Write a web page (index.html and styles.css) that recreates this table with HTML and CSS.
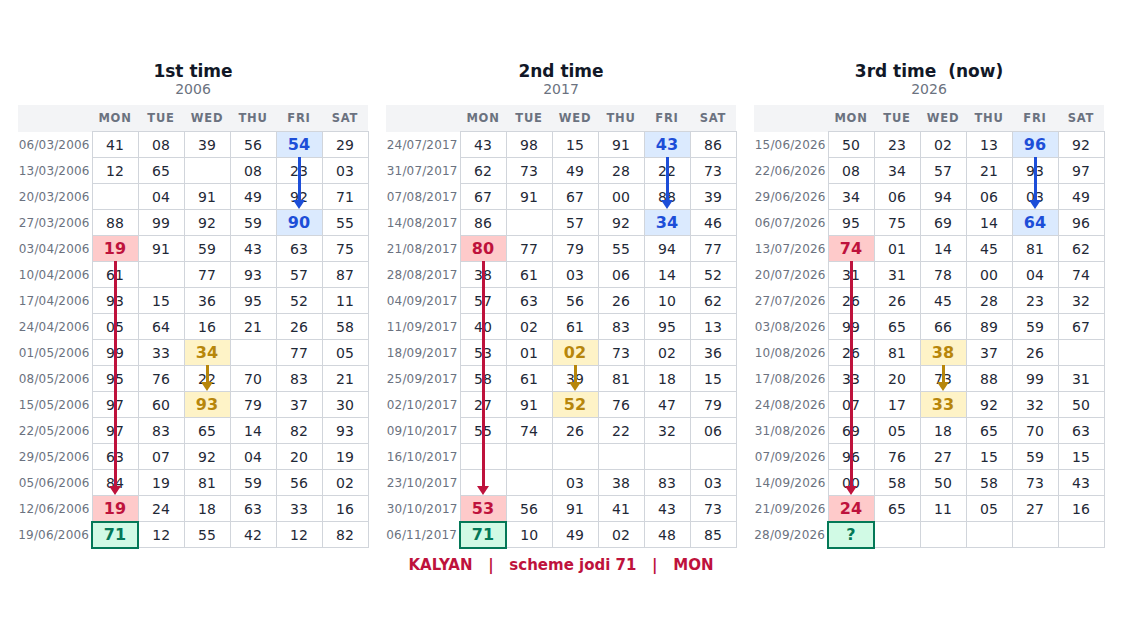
FILE: index.html
```html
<!DOCTYPE html>
<html>
<head>
<meta charset="utf-8">
<title>KALYAN scheme jodi 71</title>
<link rel="stylesheet" href="styles.css">
</head>
<body>
<div class="page">
  <div class="panels">
    <section class="panel">
      <div class="title">1st time</div>
      <div class="year">2006</div>
      <div class="grid-wrap">
        <table>
          <colgroup><col class="dc"><col class="nc"><col class="nc"><col class="nc"><col class="nc"><col class="nc"><col class="nc"></colgroup>
          <thead><tr><th></th><th>MON</th><th>TUE</th><th>WED</th><th>THU</th><th>FRI</th><th>SAT</th></tr></thead>
          <tbody>
            <tr><td class="d">06/03/2006</td><td>41</td><td>08</td><td>39</td><td>56</td><td class="b">54</td><td>29</td></tr>
            <tr><td class="d">13/03/2006</td><td>12</td><td>65</td><td></td><td>08</td><td>23</td><td>03</td></tr>
            <tr><td class="d">20/03/2006</td><td></td><td>04</td><td>91</td><td>49</td><td>92</td><td>71</td></tr>
            <tr><td class="d">27/03/2006</td><td>88</td><td>99</td><td>92</td><td>59</td><td class="b">90</td><td>55</td></tr>
            <tr><td class="d">03/04/2006</td><td class="r">19</td><td>91</td><td>59</td><td>43</td><td>63</td><td>75</td></tr>
            <tr><td class="d">10/04/2006</td><td>61</td><td></td><td>77</td><td>93</td><td>57</td><td>87</td></tr>
            <tr><td class="d">17/04/2006</td><td>93</td><td>15</td><td>36</td><td>95</td><td>52</td><td>11</td></tr>
            <tr><td class="d">24/04/2006</td><td>05</td><td>64</td><td>16</td><td>21</td><td>26</td><td>58</td></tr>
            <tr><td class="d">01/05/2006</td><td>99</td><td>33</td><td class="y">34</td><td></td><td>77</td><td>05</td></tr>
            <tr><td class="d">08/05/2006</td><td>95</td><td>76</td><td>22</td><td>70</td><td>83</td><td>21</td></tr>
            <tr><td class="d">15/05/2006</td><td>97</td><td>60</td><td class="y">93</td><td>79</td><td>37</td><td>30</td></tr>
            <tr><td class="d">22/05/2006</td><td>97</td><td>83</td><td>65</td><td>14</td><td>82</td><td>93</td></tr>
            <tr><td class="d">29/05/2006</td><td>63</td><td>07</td><td>92</td><td>04</td><td>20</td><td>19</td></tr>
            <tr><td class="d">05/06/2006</td><td>84</td><td>19</td><td>81</td><td>59</td><td>56</td><td>02</td></tr>
            <tr><td class="d">12/06/2006</td><td class="r">19</td><td>24</td><td>18</td><td>63</td><td>33</td><td>16</td></tr>
            <tr><td class="d">19/06/2006</td><td class="g">71</td><td>12</td><td>55</td><td>42</td><td>12</td><td>82</td></tr>
          </tbody>
        </table>
        <div class="arrow fri"></div>
        <div class="arrow mon"></div>
        <div class="arrow wed"></div>
      </div>
    </section>

    <section class="panel">
      <div class="title">2nd time</div>
      <div class="year">2017</div>
      <div class="grid-wrap">
        <table>
          <colgroup><col class="dc"><col class="nc"><col class="nc"><col class="nc"><col class="nc"><col class="nc"><col class="nc"></colgroup>
          <thead><tr><th></th><th>MON</th><th>TUE</th><th>WED</th><th>THU</th><th>FRI</th><th>SAT</th></tr></thead>
          <tbody>
            <tr><td class="d">24/07/2017</td><td>43</td><td>98</td><td>15</td><td>91</td><td class="b">43</td><td>86</td></tr>
            <tr><td class="d">31/07/2017</td><td>62</td><td>73</td><td>49</td><td>28</td><td>22</td><td>73</td></tr>
            <tr><td class="d">07/08/2017</td><td>67</td><td>91</td><td>67</td><td>00</td><td>88</td><td>39</td></tr>
            <tr><td class="d">14/08/2017</td><td>86</td><td></td><td>57</td><td>92</td><td class="b">34</td><td>46</td></tr>
            <tr><td class="d">21/08/2017</td><td class="r">80</td><td>77</td><td>79</td><td>55</td><td>94</td><td>77</td></tr>
            <tr><td class="d">28/08/2017</td><td>38</td><td>61</td><td>03</td><td>06</td><td>14</td><td>52</td></tr>
            <tr><td class="d">04/09/2017</td><td>57</td><td>63</td><td>56</td><td>26</td><td>10</td><td>62</td></tr>
            <tr><td class="d">11/09/2017</td><td>40</td><td>02</td><td>61</td><td>83</td><td>95</td><td>13</td></tr>
            <tr><td class="d">18/09/2017</td><td>53</td><td>01</td><td class="y">02</td><td>73</td><td>02</td><td>36</td></tr>
            <tr><td class="d">25/09/2017</td><td>58</td><td>61</td><td>39</td><td>81</td><td>18</td><td>15</td></tr>
            <tr><td class="d">02/10/2017</td><td>27</td><td>91</td><td class="y">52</td><td>76</td><td>47</td><td>79</td></tr>
            <tr><td class="d">09/10/2017</td><td>55</td><td>74</td><td>26</td><td>22</td><td>32</td><td>06</td></tr>
            <tr><td class="d">16/10/2017</td><td></td><td></td><td></td><td></td><td></td><td></td></tr>
            <tr><td class="d">23/10/2017</td><td></td><td></td><td>03</td><td>38</td><td>83</td><td>03</td></tr>
            <tr><td class="d">30/10/2017</td><td class="r">53</td><td>56</td><td>91</td><td>41</td><td>43</td><td>73</td></tr>
            <tr><td class="d">06/11/2017</td><td class="g">71</td><td>10</td><td>49</td><td>02</td><td>48</td><td>85</td></tr>
          </tbody>
        </table>
        <div class="arrow fri"></div>
        <div class="arrow mon"></div>
        <div class="arrow wed"></div>
      </div>
    </section>

    <section class="panel">
      <div class="title">3rd time  (now)</div>
      <div class="year">2026</div>
      <div class="grid-wrap">
        <table>
          <colgroup><col class="dc"><col class="nc"><col class="nc"><col class="nc"><col class="nc"><col class="nc"><col class="nc"></colgroup>
          <thead><tr><th></th><th>MON</th><th>TUE</th><th>WED</th><th>THU</th><th>FRI</th><th>SAT</th></tr></thead>
          <tbody>
            <tr><td class="d">15/06/2026</td><td>50</td><td>23</td><td>02</td><td>13</td><td class="b">96</td><td>92</td></tr>
            <tr><td class="d">22/06/2026</td><td>08</td><td>34</td><td>57</td><td>21</td><td>93</td><td>97</td></tr>
            <tr><td class="d">29/06/2026</td><td>34</td><td>06</td><td>94</td><td>06</td><td>03</td><td>49</td></tr>
            <tr><td class="d">06/07/2026</td><td>95</td><td>75</td><td>69</td><td>14</td><td class="b">64</td><td>96</td></tr>
            <tr><td class="d">13/07/2026</td><td class="r">74</td><td>01</td><td>14</td><td>45</td><td>81</td><td>62</td></tr>
            <tr><td class="d">20/07/2026</td><td>31</td><td>31</td><td>78</td><td>00</td><td>04</td><td>74</td></tr>
            <tr><td class="d">27/07/2026</td><td>26</td><td>26</td><td>45</td><td>28</td><td>23</td><td>32</td></tr>
            <tr><td class="d">03/08/2026</td><td>99</td><td>65</td><td>66</td><td>89</td><td>59</td><td>67</td></tr>
            <tr><td class="d">10/08/2026</td><td>26</td><td>81</td><td class="y">38</td><td>37</td><td>26</td><td></td></tr>
            <tr><td class="d">17/08/2026</td><td>33</td><td>20</td><td>73</td><td>88</td><td>99</td><td>31</td></tr>
            <tr><td class="d">24/08/2026</td><td>07</td><td>17</td><td class="y">33</td><td>92</td><td>32</td><td>50</td></tr>
            <tr><td class="d">31/08/2026</td><td>69</td><td>05</td><td>18</td><td>65</td><td>70</td><td>63</td></tr>
            <tr><td class="d">07/09/2026</td><td>96</td><td>76</td><td>27</td><td>15</td><td>59</td><td>15</td></tr>
            <tr><td class="d">14/09/2026</td><td>00</td><td>58</td><td>50</td><td>58</td><td>73</td><td>43</td></tr>
            <tr><td class="d">21/09/2026</td><td class="r">24</td><td>65</td><td>11</td><td>05</td><td>27</td><td>16</td></tr>
            <tr><td class="d">28/09/2026</td><td class="g">?</td><td></td><td></td><td></td><td></td><td></td></tr>
          </tbody>
        </table>
        <div class="arrow fri"></div>
        <div class="arrow mon"></div>
        <div class="arrow wed"></div>
      </div>
    </section>
  </div>
  <div class="caption">KALYAN   |   scheme jodi 71   |   MON</div>
</div>
</body>
</html>
```

FILE: styles.css
```css
body {
  margin: 0;
  background: #ffffff;
  font-family: "DejaVu Sans", "Noto Sans", sans-serif;
}

.page {
  padding-top: 61px;
}

.panels {
  display: flex;
  gap: 18px;
  padding: 0 18px;
}

.panel {
  width: 350px;
  flex: none;
}

.title {
  text-align: center;
  font-size: 17px;
  font-weight: 700;
  line-height: 20px;
  color: #111827;
  white-space: pre;
}

.year {
  text-align: center;
  font-size: 14px;
  line-height: 16px;
  color: #6b7280;
  margin-bottom: 8px;
}

.grid-wrap {
  position: relative;
}

table {
  border-collapse: collapse;
  table-layout: fixed;
  width: 350px;
}

col.dc { width: 74px; }
col.nc { width: 46px; }

thead th {
  background: #f3f4f6;
  height: 26px;
  padding: 0;
  font-size: 11.5px;
  font-weight: 700;
  color: #6b7280;
  letter-spacing: 0.8px;
  text-align: center;
}

tbody tr {
  height: 26px;
}

td {
  padding: 0;
  text-align: center;
  font-size: 14px;
  color: #1f2937;
  border: 1px solid #d1d5db;
}

td.d {
  border: none;
  text-align: right;
  padding-right: 2px;
  font-size: 12px;
  letter-spacing: 0.15px;
  color: #6b7280;
}

td.b, td.r, td.y, td.g {
  font-weight: 700;
  font-size: 16px;
}

td.b { background: #dbeafe; color: #1d4ed8; }
td.r { background: #fecaca; color: #be123c; }
td.y { background: #fef3c7; color: #b7860b; }
td.g { background: #d1fae5; color: #047857; border: 2px solid #047857; }

.arrow {
  position: absolute;
  width: 13px;
  z-index: 2;
}

.arrow::before {
  content: "";
  position: absolute;
  left: 5px;
  top: 0;
  bottom: 8px;
  width: 3px;
  background: currentColor;
}

.arrow::after {
  content: "";
  position: absolute;
  left: 0;
  bottom: 0;
  border-left: 6.5px solid transparent;
  border-right: 6.5px solid transparent;
  border-top: 9px solid currentColor;
}

.arrow.fri { left: 274.5px; top: 52px; height: 52px; color: #1d4ed8; }
.arrow.mon { left: 90.5px; top: 156px; height: 234px; color: #be123c; }
.arrow.wed { left: 182.5px; top: 260px; height: 26px; color: #b7860b; }

.caption {
  text-align: center;
  margin-top: 6px;
  font-size: 15px;
  font-weight: 700;
  line-height: 20px;
  color: #be123c;
  white-space: pre;
}
```
